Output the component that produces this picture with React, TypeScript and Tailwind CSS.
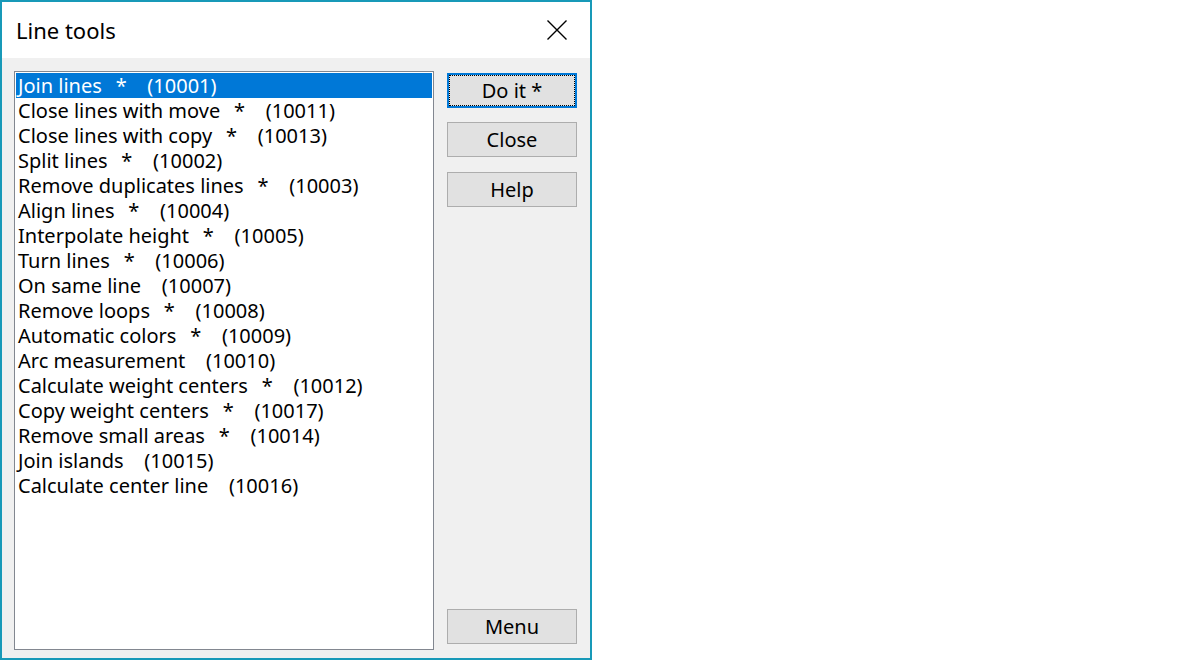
import React from 'react';

const items: [string, boolean, string][] = [
  ['Join lines', true, '10001'],
  ['Close lines with move', true, '10011'],
  ['Close lines with copy', true, '10013'],
  ['Split lines', true, '10002'],
  ['Remove duplicates lines', true, '10003'],
  ['Align lines', true, '10004'],
  ['Interpolate height', true, '10005'],
  ['Turn lines', true, '10006'],
  ['On same line', false, '10007'],
  ['Remove loops', true, '10008'],
  ['Automatic colors', true, '10009'],
  ['Arc measurement', false, '10010'],
  ['Calculate weight centers', true, '10012'],
  ['Copy weight centers', true, '10017'],
  ['Remove small areas', true, '10014'],
  ['Join islands', false, '10015'],
  ['Calculate center line', false, '10016'],
];

const font = { fontFamily: '"Noto Sans", "Liberation Sans", sans-serif' };

export default function App() {
  return (
    <div className="w-[1200px] h-[660px] bg-white" style={font}>
      <div className="w-[592px] h-[660px] flex flex-col border-2 border-[#1899b8] bg-[#f0f0f0]">
        {/* Title bar */}
        <div className="h-[56px] bg-white flex items-center justify-between shrink-0">
          <span className="pl-[14px] text-[22px] text-black">Line tools</span>
          <svg className="mr-[23px]" width="20" height="20" viewBox="0 0 20 20">
            <path d="M0.5 0.5L19.5 19.5M19.5 0.5L0.5 19.5" stroke="#000" strokeWidth="1.4" />
          </svg>
        </div>

        <div className="flex-1 flex pl-[12px] pt-[13px] pb-[8px]">
          {/* List */}
          <div className="w-[420px] h-[579px] border border-[#828790] bg-white p-[1px]">
            {items.map(([name, star, id], i) => (
              <div
                key={i}
                className={
                  'h-[25px] pl-[2px] text-[20px] leading-[25px] whitespace-pre ' +
                  (i === 0 ? 'bg-[#0078d7] text-white' : 'text-black')
                }
              >
                {name}
                <span className="[word-spacing:1.7px]">
                  {star ? `  *   (${id})` : `   (${id})`}
                </span>
              </div>
            ))}
          </div>

          {/* Buttons */}
          <div className="flex flex-col ml-[13px] mt-[2px] w-[130px] h-[571px]">
            <button className="h-[35px] border-2 border-[#0078d7] bg-[#e1e1e1] p-0">
              <div className="h-full border border-dotted border-black flex items-center justify-center text-[20px] text-black">
                Do it *
              </div>
            </button>
            <button className="mt-[14px] h-[35px] border border-[#adadad] bg-[#e1e1e1] text-[20px] text-black">
              Close
            </button>
            <button className="mt-[15px] h-[35px] border border-[#adadad] bg-[#e1e1e1] text-[20px] text-black">
              Help
            </button>
            <div className="flex-1" />
            <button className="h-[35px] border border-[#adadad] bg-[#e1e1e1] text-[20px] text-black">
              Menu
            </button>
          </div>
        </div>
      </div>
    </div>
  );
}
